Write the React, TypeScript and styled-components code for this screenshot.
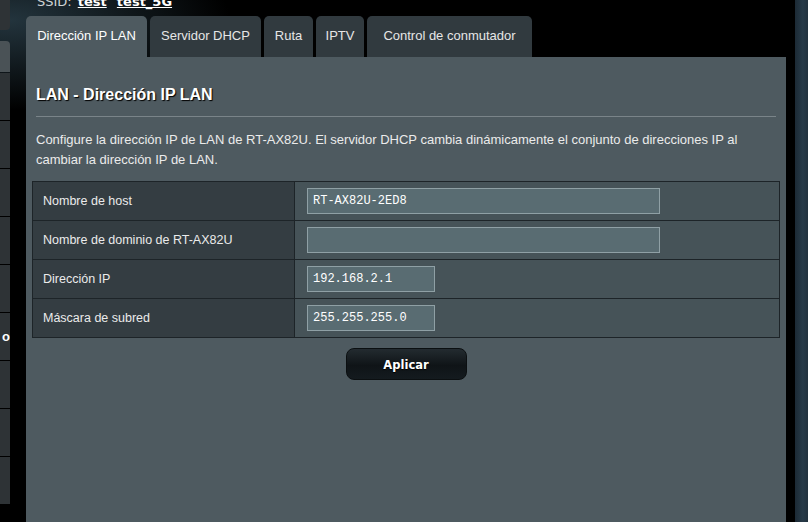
import styled, { createGlobalStyle } from "styled-components";

const colors = {
    page: "#000000",
    panel: "#4e5a60",
    tabIdle: "#313a3f",
    labelCell: "#343d42",
    valueCell: "#465358",
    grid: "#1d2428",
    input: "#596c72",
    inputBorder: "#8fa0a5",
    text: "#ebebeb",
    menu: "#2e3336",
    strip: "#22323f",
};

const GlobalStyle = createGlobalStyle`
    html, body {
        margin: 0;
        padding: 0;
        background: ${colors.page};
        overflow: hidden;
    }
    * { box-sizing: border-box; }
`;

const Page = styled.div`
    display: flex;
    height: 522px;
    width: 808px;
    overflow: hidden;
    background:
        radial-gradient(ellipse 220px 90px at 10px 20px, #23343d 0%, rgba(0,0,0,0) 100%),
        ${colors.page};
    font-family: "Liberation Sans", Arial, sans-serif;
`;

const Menu = styled.div`
    width: 10px;
    display: flex;
    flex-direction: column;
    flex-shrink: 0;
`;

const MenuItem = styled.div<{ height: number; first?: boolean; lead?: boolean }>`
    height: ${props => props.height}px;
    margin-bottom: ${props => props.first ? 11 : 1}px;
    background: ${props => props.lead ? "#4a5256" : colors.menu};
    border-bottom-right-radius: ${props => props.first ? 4 : 0}px;
    border-top-right-radius: ${props => props.lead ? 4 : 0}px;
    display: flex;
    align-items: center;
    justify-content: flex-end;
    overflow: hidden;
    color: #fff;
    font-weight: bold;
    font-size: 13px;
`;

const Main = styled.div`
    width: 760px;
    margin-left: 16px;
    display: flex;
    flex-direction: column;
    flex-shrink: 0;
`;

const SsidLine = styled.div`
    height: 16px;
    padding-left: 11px;
    font-family: "DejaVu Sans", Verdana, sans-serif;
    font-size: 13px;
    line-height: 13px;
    color: #cfd3d5;
    margin-top: -5px;
    margin-bottom: 5px;
    white-space: nowrap;
`;

const SsidName = styled.span`
    color: #fff;
    font-weight: bold;
    text-decoration: underline;
    margin-left: 6px;
`;

const Tabs = styled.div`
    display: flex;
    gap: 3px;
    height: 41px;
`;

const Tab = styled.div<{ active?: boolean; width: number }>`
    width: ${props => props.width}px;
    display: flex;
    align-items: center;
    justify-content: center;
    padding-bottom: 2px;
    border-radius: 5px 5px 0 0;
    font-size: 13px;
    color: ${props => props.active ? "#ffffff" : "#e6e6e6"};
    background: ${props => props.active ? colors.panel : colors.tabIdle};
    white-space: nowrap;
`;

const Panel = styled.div`
    flex: 1;
    background: ${colors.panel};
    padding: 0 6px;
    display: flex;
    flex-direction: column;
`;

const Heading = styled.h2`
    margin: 28px 4px 0;
    font-size: 16px;
    line-height: 20px;
    font-weight: bold;
    color: #fff;
    text-shadow: 1px 1px 1px #000;
`;

const Divider = styled.div`
    margin: 11px 4px 0;
    height: 1px;
    background: #7a8489;
`;

const Description = styled.p`
    margin: 13px 4px 0;
    font-size: 13px;
    line-height: 20px;
    color: ${colors.text};
`;

const Grid = styled.table`
    margin-top: 11px;
    width: 100%;
    border-collapse: collapse;
    border: 1px solid ${colors.grid};
`;

const Row = styled.tr`
    height: 39px;
`;

const Label = styled.th`
    width: 262px;
    padding: 0 0 0 10px;
    text-align: left;
    font-weight: normal;
    font-size: 12.5px;
    color: ${colors.text};
    background: ${colors.labelCell};
    border: 1px solid ${colors.grid};
`;

const Value = styled.td`
    padding: 0 0 0 12px;
    background: ${colors.valueCell};
    border: 1px solid ${colors.grid};
`;

const Field = styled.input<{ $wide?: boolean }>`
    display: block;
    width: ${props => props.$wide ? 353 : 128}px;
    height: 26px;
    padding: 0 5px;
    background: ${colors.input};
    border: 1px solid ${colors.inputBorder};
    color: #fff;
    font-family: "Liberation Mono", "Courier New", monospace;
    font-size: 12px;
    outline: none;
`;

const Actions = styled.div`
    display: flex;
    justify-content: center;
    margin-top: 10px;
`;

const ApplyButton = styled.button`
    width: 121px;
    height: 32px;
    border: 1px solid #0b0f11;
    border-radius: 8px;
    background: linear-gradient(to bottom, #232b30 0%, #0f1417 55%, #141b1f 100%);
    color: #fff;
    font-family: "DejaVu Sans", Verdana, sans-serif;
    font-weight: bold;
    font-size: 11.5px;
    text-shadow: 0 1px 1px #000;
    padding: 1px 0 0;
`;

const Gutter = styled.div`
    width: 9px;
    flex-shrink: 0;
`;

const Strip = styled.div`
    flex: 1;
    background: linear-gradient(to right, #1c2a35, #273a48 60%, #22323e);
`;

const menuHeights = [30, 31, 47, 47, 47, 47, 47, 47, 47, 47, 47];

const fields = [
    { label: "Nombre de host", value: "RT-AX82U-2ED8", wide: true },
    { label: "Nombre de dominio de RT-AX82U", value: "", wide: true },
    { label: "Dirección IP", value: "192.168.2.1", wide: false },
    { label: "Máscara de subred", value: "255.255.255.0", wide: false },
];

const tabs = [
    { name: "Dirección IP LAN", width: 121 },
    { name: "Servidor DHCP", width: 111 },
    { name: "Ruta", width: 49 },
    { name: "IPTV", width: 48 },
    { name: "Control de conmutador", width: 165 },
];

export default function App() {
    return <>
        <GlobalStyle />
        <Page>
            <Menu>
                {menuHeights.map((h, i) =>
                    <MenuItem key={i} height={h} first={i === 0} lead={i === 1}>
                        {i === 7 ? <span>o</span> : null}
                    </MenuItem>
                )}
            </Menu>
            <Main>
                <SsidLine>
                    SSID:<SsidName>test</SsidName> <SsidName>test_5G</SsidName>
                </SsidLine>
                <Tabs>
                    {tabs.map((t, i) =>
                        <Tab key={t.name} active={i === 0} width={t.width}>{t.name}</Tab>
                    )}
                </Tabs>
                <Panel>
                    <Heading>LAN - Dirección IP LAN</Heading>
                    <Divider />
                    <Description>
                        Configure la dirección IP de LAN de RT-AX82U. El servidor DHCP cambia dinámicamente el conjunto de direcciones IP al cambiar la dirección IP de LAN.
                    </Description>
                    <Grid>
                        <tbody>
                            {fields.map(f =>
                                <Row key={f.label}>
                                    <Label>{f.label}</Label>
                                    <Value>
                                        <Field $wide={f.wide} defaultValue={f.value} />
                                    </Value>
                                </Row>
                            )}
                        </tbody>
                    </Grid>
                    <Actions>
                        <ApplyButton>Aplicar</ApplyButton>
                    </Actions>
                </Panel>
            </Main>
            <Gutter />
            <Strip />
        </Page>
    </>;
}
